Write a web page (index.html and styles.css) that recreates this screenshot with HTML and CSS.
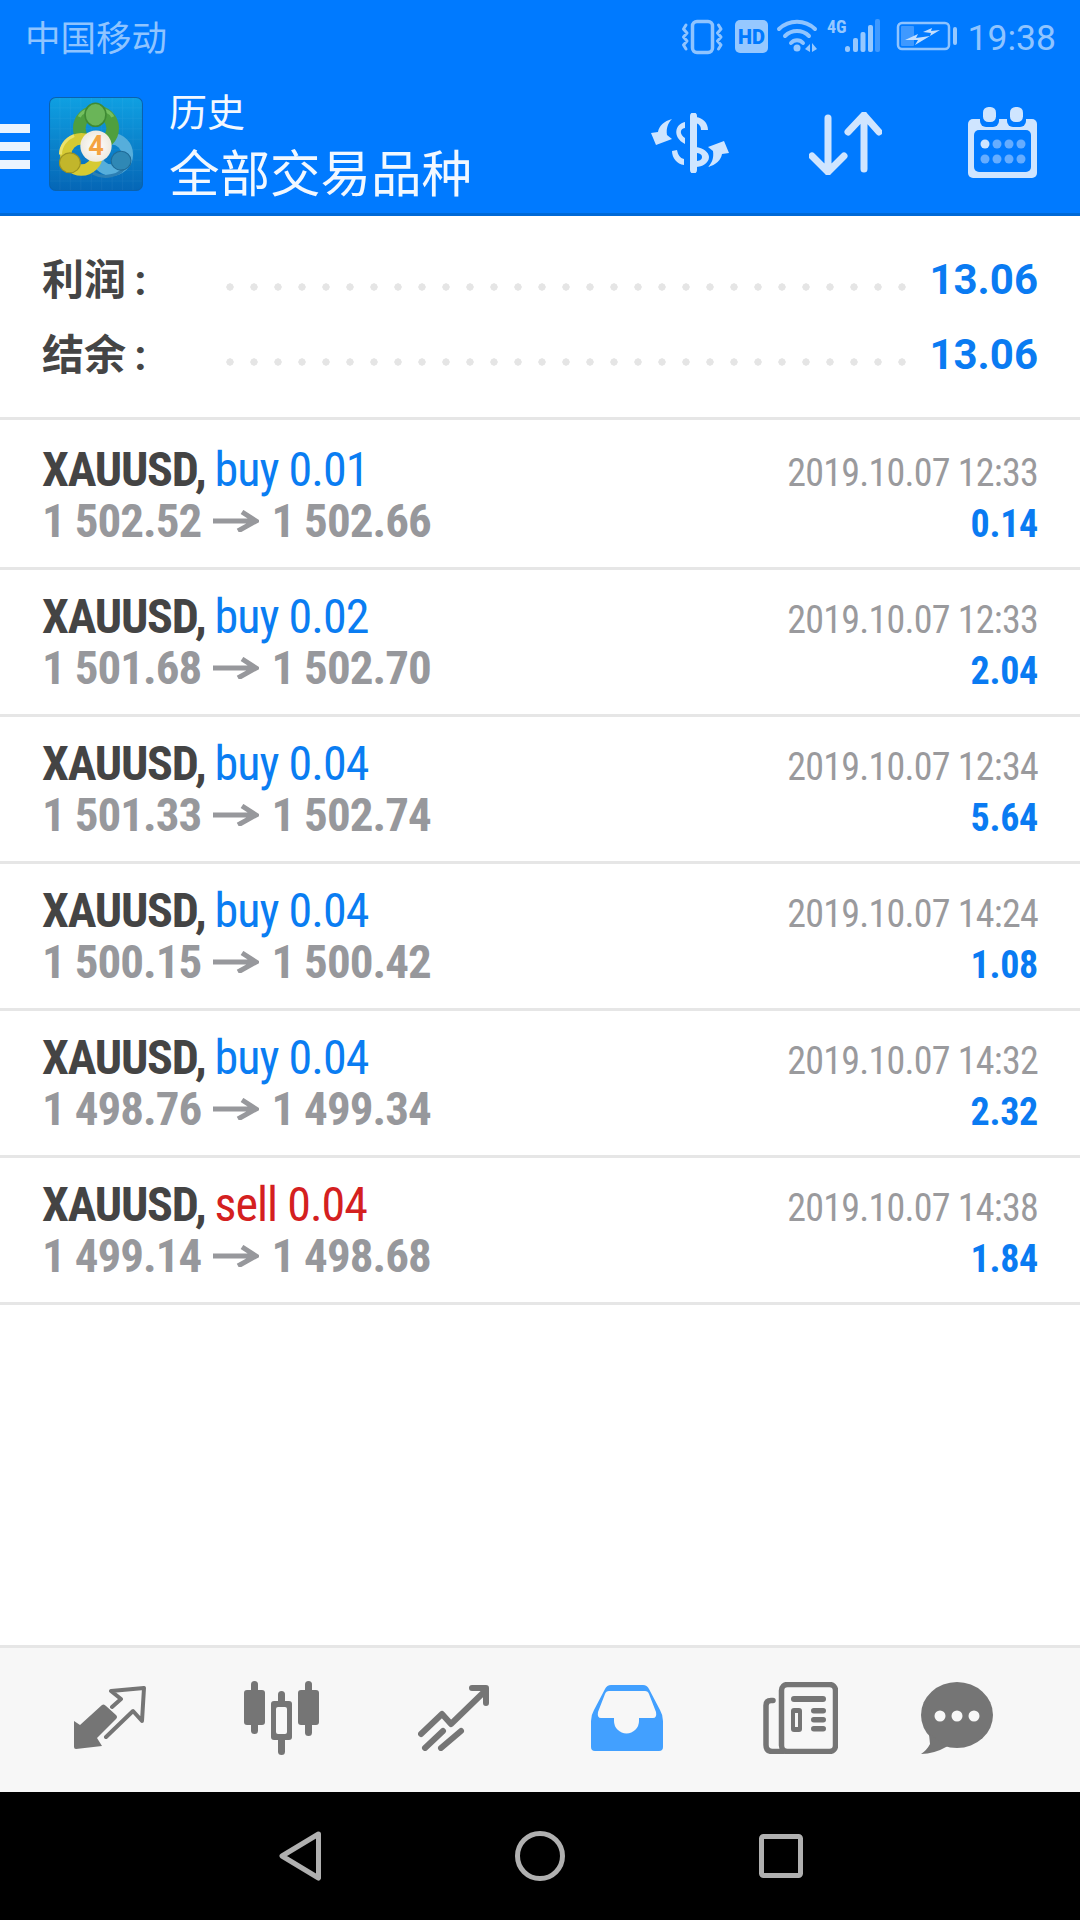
FILE: index.html
```html
<!DOCTYPE html>
<html lang="zh">
<head>
<meta charset="utf-8">
<title>历史</title>
<link rel="stylesheet" href="styles.css">
</head>
<body>
<div class="screen">
  <header class="appbar">
    <div class="status">
      <span class="carrier">中国移动</span>
      <div class="status-right">
        <svg class="status-icons" width="275" height="36" viewBox="0 0 275 36">
          <rect class="st-line" x="10.5" y="2.5" width="20" height="31" rx="4.5" stroke-width="3.500"/>
          <path class="st-line" stroke-width="3" d="M4 6 1.500 10l3.500 4-3.500 4 3.500 4-3.500 4 2.500 4M36.500 6l2.500 4-3.500 4 3.500 4-3.500 4 3.500 4-2.500 4"/>
          <rect class="st-fill" x="53" y="1" width="33" height="33" rx="5"/>
          <text class="hd" x="69.5" y="25" text-anchor="middle">HD</text>
          <circle class="st-fill" cx="115" cy="29" r="3.500"/>
          <path class="st-line" stroke-width="4" d="M97 10A26 26 0 0 1 133 10M103 17A17 17 0 0 1 127 17M109 24A8 8 0 0 1 121 24"/>
          <path class="st-fill" d="M123 30l5-5v8zM130 24l5 6-5 3z"/>
          <text class="net" x="145" y="14">4G</text>
          <rect class="st-fill" x="163" y="27" width="5" height="6" rx="2.500"/>
          <rect class="st-fill" x="171" y="19" width="5" height="14" rx="2"/>
          <rect class="st-fill" x="178.500" y="13" width="5" height="20" rx="2"/>
          <rect class="st-fill" x="186" y="6" width="5" height="27" rx="2"/>
          <rect class="st-dim" x="193" y="0" width="5" height="33" rx="2"/>
          <rect class="st-line" x="216" y="4" width="51" height="26" rx="4" stroke-width="2.500"/>
          <rect class="st-fill" x="271" y="8" width="4" height="18" rx="2"/>
          <rect class="st-dim" x="219" y="7" width="13" height="20" rx="1"/>
          <path class="st-bolt" d="M223 21l13-6-2 4 14-2-15 9 3-5zM241 13l9-4-1 3 9-1-10 6 1-3z"/>
        </svg>
        <span class="clock">19:38</span>
      </div>
    </div>
    <div class="toolbar">
      <div class="menu"><span></span><span></span><span></span></div>
      <svg class="logo" width="94" height="94" viewBox="0 0 90 90">
        <defs>
          <linearGradient id="logoBg" x1="0" y1="0" x2="0" y2="1">
            <stop offset="0" stop-color="#0fa0e2"/>
            <stop offset="1" stop-color="#0566b6"/>
          </linearGradient>
          <pattern id="logoGrid" width="10" height="10" patternUnits="userSpaceOnUse">
            <path d="M10 0H0V10" fill="none" stroke="#fff" stroke-opacity=".07"/>
          </pattern>
          <radialGradient id="logoFace" cx=".5" cy=".5" r=".55">
            <stop offset="0" stop-color="#ffffff"/>
            <stop offset="1" stop-color="#ece7dc"/>
          </radialGradient>
        </defs>
        <rect x=".5" y=".5" width="89" height="89" rx="6" fill="url(#logoBg)" stroke="#0a62ad"/>
        <rect x="1" y="1" width="88" height="88" rx="6" fill="url(#logoGrid)"/>
        <circle cx="60" cy="55" r="15" fill="none" stroke="#56aedb" stroke-width="11"/>
        <path d="M42 73c11 6 27 3 33-9" fill="none" stroke="#2c7fb4" stroke-width="3"/>
        <circle cx="45" cy="30" r="16" fill="none" stroke="#4f9f3f" stroke-width="12"/>
        <path d="M29 19c4-10 28-10 32 0" fill="none" stroke="#74bf5f" stroke-width="3"/>
        <ellipse cx="44.500" cy="17" rx="10" ry="11" fill="#6ab558" stroke="#3f8a34" stroke-width="1.500"/>
        <circle cx="31" cy="55" r="15" fill="none" stroke="#d6ca33" stroke-width="11"/>
        <path d="M24 37c-8 3-13 10-13 18" fill="none" stroke="#ece26a" stroke-width="3"/>
        <ellipse cx="20" cy="63" rx="10" ry="9.500" fill="#c2b62b" stroke="#9d9320" stroke-width="1"/>
        <ellipse cx="69" cy="61" rx="9.500" ry="9" fill="#2f88b5" stroke="#1f6a96" stroke-width="1"/>
        <circle cx="45" cy="47" r="15" fill="url(#logoFace)"/>
        <text class="logo-four" x="45" y="56" text-anchor="middle">4</text>
      </svg>
      <div class="titles">
        <div class="title-small">历史</div>
        <div class="title-large">全部交易品种</div>
      </div>
      <div class="actions">
        <svg width="78" height="60" viewBox="0 0 78 60" class="act-ic">
          <path d="M39 3a3.500 3.500 0 0 1 7 0v54a3.500 3.500 0 0 1-7 0z"/>
          <path d="M45 4C52 5 57 10 57 17h-7c0-4-2-6-5-7z"/>
          <path d="M34 9C24 11 21 24 34 31v-6c-5-3-6-9 0-10z"/>
          <path d="M21 38l5-1c1 5 3 8 7 9v6C26 51 21 45 21 38z"/>
          <path d="M45 34C52 35 58 39 58 44c0 6-7 10-13 10v-6c3 0 6-1 6-4s-3-4-6-4z"/>
          <path d="M21 6C13 8 8 13 7 19L0 20l5 12 16-6-5-4C15 15 17 10 21 6z"/>
          <path d="M57 54C65 52 70 47 71 41l7-1-5-12-16 6 5 4C63 45 61 50 57 54z"/>
        </svg>
        <svg width="73" height="63" viewBox="0 0 73 63" class="act-line">
          <path d="M19 6V60M3 44 19 60 35 44M55 57V3M39 20 55 3 70 20"/>
        </svg>
        <svg class="act-cal" width="69" height="71" viewBox="0 0 69 71">
          <rect class="cal-light" x="0" y="12" width="69" height="59" rx="5"/>
          <rect class="cal-blue" x="12" y="6" width="19" height="14" rx="6"/>
          <rect class="cal-blue" x="39" y="6" width="19" height="14" rx="6"/>
          <rect class="cal-light" x="15" y="0" width="13" height="15" rx="5.500"/>
          <rect class="cal-light" x="42" y="0" width="13" height="15" rx="5.500"/>
          <rect class="cal-blue" x="6" y="23" width="57" height="42" rx="5"/>
          <circle class="cal-light" cx="17" cy="37" r="4.500"/>
          <circle class="cal-dot" cx="29" cy="37" r="4.500"/>
          <circle class="cal-dot" cx="41" cy="37" r="4.500"/>
          <circle class="cal-dot" cx="53" cy="37" r="4.500"/>
          <circle class="cal-dot" cx="17" cy="52" r="4.500"/>
          <circle class="cal-dot" cx="29" cy="52" r="4.500"/>
          <circle class="cal-dot" cx="41" cy="52" r="4.500"/>
          <circle class="cal-dot" cx="53" cy="52" r="4.500"/>
        </svg>
      </div>
    </div>
  </header>

  <section class="summary">
    <div class="sum-row">
      <span class="sum-label">利润 :</span><span class="dots"></span><span class="sum-value">13.06</span>
    </div>
    <div class="sum-row">
      <span class="sum-label">结余 :</span><span class="dots"></span><span class="sum-value">13.06</span>
    </div>
  </section>

  <main class="trades">
    <article class="trade trade-first">
      <div class="trade-left">
        <div class="trade-head"><b>XAUUSD,</b> <span class="buy">buy 0.01</span></div>
        <div class="prices"><span>1 502.52</span><svg class="arrow" width="46" height="22" viewBox="0 0 46 22"><path d="M0 11H43M29 2 43 11 25 21"/></svg><span>1 502.66</span></div>
      </div>
      <div class="trade-right"><div class="date">2019.10.07 12:33</div><div class="profit">0.14</div></div>
    </article>
    <article class="trade">
      <div class="trade-left">
        <div class="trade-head"><b>XAUUSD,</b> <span class="buy">buy 0.02</span></div>
        <div class="prices"><span>1 501.68</span><svg class="arrow" width="46" height="22" viewBox="0 0 46 22"><path d="M0 11H43M29 2 43 11 25 21"/></svg><span>1 502.70</span></div>
      </div>
      <div class="trade-right"><div class="date">2019.10.07 12:33</div><div class="profit">2.04</div></div>
    </article>
    <article class="trade">
      <div class="trade-left">
        <div class="trade-head"><b>XAUUSD,</b> <span class="buy">buy 0.04</span></div>
        <div class="prices"><span>1 501.33</span><svg class="arrow" width="46" height="22" viewBox="0 0 46 22"><path d="M0 11H43M29 2 43 11 25 21"/></svg><span>1 502.74</span></div>
      </div>
      <div class="trade-right"><div class="date">2019.10.07 12:34</div><div class="profit">5.64</div></div>
    </article>
    <article class="trade">
      <div class="trade-left">
        <div class="trade-head"><b>XAUUSD,</b> <span class="buy">buy 0.04</span></div>
        <div class="prices"><span>1 500.15</span><svg class="arrow" width="46" height="22" viewBox="0 0 46 22"><path d="M0 11H43M29 2 43 11 25 21"/></svg><span>1 500.42</span></div>
      </div>
      <div class="trade-right"><div class="date">2019.10.07 14:24</div><div class="profit">1.08</div></div>
    </article>
    <article class="trade">
      <div class="trade-left">
        <div class="trade-head"><b>XAUUSD,</b> <span class="buy">buy 0.04</span></div>
        <div class="prices"><span>1 498.76</span><svg class="arrow" width="46" height="22" viewBox="0 0 46 22"><path d="M0 11H43M29 2 43 11 25 21"/></svg><span>1 499.34</span></div>
      </div>
      <div class="trade-right"><div class="date">2019.10.07 14:32</div><div class="profit">2.32</div></div>
    </article>
    <article class="trade">
      <div class="trade-left">
        <div class="trade-head"><b>XAUUSD,</b> <span class="sell">sell 0.04</span></div>
        <div class="prices"><span>1 499.14</span><svg class="arrow" width="46" height="22" viewBox="0 0 46 22"><path d="M0 11H43M29 2 43 11 25 21"/></svg><span>1 498.68</span></div>
      </div>
      <div class="trade-right"><div class="date">2019.10.07 14:38</div><div class="profit">1.84</div></div>
    </article>
  </main>

  <nav class="tabs">
    <svg class="tab tab-trade" width="72" height="64" viewBox="0 0 72 64">
      <path d="M0 35l6 4L28 19q2-1.500 4 1l10 9q2 2 0 4L23 52l5 8-26 3q-2 0-2-2z"/>
      <path class="tab-line" stroke-width="4" d="M38 21l9-8-10-8 33-3-2 33-9-10-27 26"/>
    </svg>
    <svg class="tab tab-candles" width="75" height="74" viewBox="0 0 75 74">
      <rect x="7" y="0" width="7" height="53" rx="3.500"/>
      <rect x="0" y="9" width="21" height="35" rx="3"/>
      <rect x="34" y="10" width="7" height="64" rx="3.500"/>
      <rect x="27" y="20" width="21" height="39" rx="3"/>
      <rect class="tab-bg" x="32" y="26" width="11" height="27" rx="2"/>
      <rect x="61" y="0" width="7" height="55" rx="3.500"/>
      <rect x="54" y="9" width="21" height="35" rx="3"/>
    </svg>
    <svg class="tab tab-chart" width="71" height="66" viewBox="0 0 71 66">
      <path class="tab-line" stroke-width="6" d="M3 49 24 29l9 10L66 7M54 3H68V18M7 63 25 46M23 63 43 46"/>
    </svg>
    <svg class="tab tab-inbox" width="72" height="66" viewBox="0 0 72 66">
      <path d="M20 0H52q4 0 6 4L69 25q3 5 3 11V62q0 4-4 4H4q-4 0-4-4V36q0-6 3-11L14 4q2-4 6-4z"/>
      <path class="tab-bg" d="M18 6H54q3 0 4 3l7 18q1 6-3 6H48v3A12.500 12.500 0 0 1 23 36V33H10q-4 0-3-6L14 9q1-3 4-3z"/>
    </svg>
    <svg class="tab tab-news" width="75" height="72" viewBox="0 0 75 72">
      <rect class="tab-line" stroke-width="5.500" x="18.500" y="2.500" width="54" height="67" rx="6"/>
      <path class="tab-line" stroke-width="5.500" d="M10 18.500H8q-5 0-5 5V63q0 6.500 6.500 6.500H20"/>
      <rect x="28" y="14" width="35" height="6" rx="3"/>
      <rect x="28" y="26" width="11" height="24" rx="3"/>
      <rect class="tab-bg" x="32" y="31" width="3" height="14"/>
      <rect x="48" y="26" width="15" height="5.500" rx="2.750"/>
      <rect x="48" y="35" width="15" height="5.500" rx="2.750"/>
      <rect x="48" y="44" width="15" height="5.500" rx="2.750"/>
    </svg>
    <svg class="tab tab-chat" width="72" height="72" viewBox="0 0 72 72">
      <ellipse cx="36" cy="33" rx="36" ry="33"/>
      <path d="M8 52 9 62Q6 68 0 72 13 72 27 64z"/>
      <circle class="tab-bg" cx="19" cy="34" r="5.500"/>
      <circle class="tab-bg" cx="36" cy="34" r="5.500"/>
      <circle class="tab-bg" cx="53" cy="34" r="5.500"/>
    </svg>
  </nav>

  <footer class="sysnav">
    <svg width="42" height="50" viewBox="0 0 42 50"><path d="M39.500 3 3 25 39.500 47z"/></svg>
    <svg width="50" height="50" viewBox="0 0 50 50"><circle cx="25" cy="25" r="22.500"/></svg>
    <svg width="44" height="44" viewBox="0 0 44 44"><rect x="2.500" y="2.500" width="39" height="39" rx="2"/></svg>
  </footer>
</div>
</body>
</html>
```
FILE: styles.css
```css
* { box-sizing: border-box; }

html, body { margin: 0; padding: 0; }

body {
  font-family: Roboto, "Noto Sans CJK SC", sans-serif;
  background: #fff;
}

.screen {
  width: 1080px;
  height: 1920px;
  display: flex;
  flex-direction: column;
  overflow: hidden;
}

/* App bar */
.appbar {
  background: #007aff;
  border-bottom: 3px solid #0069d6;
  height: 216px;
  flex: none;
}

.status {
  height: 72px;
  display: flex;
  align-items: center;
  justify-content: space-between;
  padding: 0 24px 0 25px;
  color: #8fc4ff;
}

.carrier {
  font-family: "Noto Sans CJK SC", sans-serif;
  font-size: 35.500px;
  line-height: 40px;
}

.status-right { display: flex; align-items: center; gap: 11px; margin-top: 2px; }

.status-icons { overflow: visible; }

.clock { font-size: 35.500px; line-height: 40px; margin-top: 1px; }

.st-line { fill: none; stroke: #8fc4ff; stroke-linecap: round; stroke-linejoin: round; }
.st-fill { fill: #96c8ff; }
.st-dim { fill: #3f99ff; }
.st-bolt { fill: #c4dfff; }

.hd {
  font-family: Roboto, sans-serif;
  font-weight: 900;
  font-size: 20px;
  fill: #007aff;
}

.net {
  font-family: "Roboto Condensed", Roboto, sans-serif;
  font-stretch: 75%;
  font-weight: 700;
  font-size: 18px;
  fill: #96c8ff;
}

.toolbar {
  height: 141px;
  display: flex;
  align-items: center;
}

.menu {
  width: 30px;
  display: flex;
  flex-direction: column;
  gap: 9px;
  margin-top: 8px;
}

.menu span { display: block; height: 9px; background: #eaf4ff; }

.logo { margin: 3px 0 0 19px; flex: none; }

.titles {
  margin: 1px 0 0 26px;
  color: #f2f8ff;
  font-family: "Noto Sans CJK SC", sans-serif;
}

.title-small { font-size: 38px; line-height: 46px; }
.title-large { font-size: 50.500px; line-height: 60px; margin-top: 7px; }

.actions {
  margin-left: auto;
  padding-right: 43px;
  display: flex;
  align-items: center;
  gap: 80px;
}

.act-ic { fill: #cfe5ff; }
.act-line { fill: none; stroke: #cfe5ff; stroke-width: 7; stroke-linecap: round; stroke-linejoin: round; margin-top: 2px; }
.act-cal { margin-left: 6px; }
.cal-light { fill: #cfe5ff; }
.cal-blue { fill: #007aff; }
.cal-dot { fill: #66adff; }

/* Summary */
.summary {
  flex: none;
  height: 204px;
  padding: 26px 42px 0 42px;
  border-bottom: 3px solid #e6e6e6;
}

.sum-row {
  height: 75px;
  display: flex;
  align-items: center;
}

.sum-label {
  width: 184px;
  flex: none;
  font-size: 42px;
  font-weight: 700;
  line-height: 48px;
  word-spacing: -2px;
  color: #454545;
  margin-top: 3px;
}

.dots {
  width: 680px;
  height: 8px;
  flex: none;
  margin-top: 15px;
  background: radial-gradient(circle at 4px 4px, #e5e5e5 3.400px, transparent 3.900px) 0 0 / 24px 8px repeat-x;
}

.sum-value {
  margin-left: auto;
  font-size: 42px;
  font-weight: 700;
  line-height: 48px;
  color: #0a7bf2;
}

/* Trades */
.trades { flex: 1; }

.trade {
  height: 147px;
  padding: 21px 42px 0 42px;
  display: flex;
  justify-content: space-between;
  border-bottom: 3px solid #e6e6e6;
  font-family: "Roboto Condensed", Roboto, sans-serif;
  font-stretch: 75%;
}

.trade-first { height: 150px; padding-top: 24px; }

.trade-head { font-size: 48px; line-height: 52px; }

.trade-head b { font-weight: 700; color: #444; letter-spacing: -1.200px; }
.buy, .sell { letter-spacing: -.950px; margin-left: -2px; }
.buy { color: #0a7df2; }
.sell { color: #d4201f; }

.prices {
  display: flex;
  align-items: center;
  gap: 12px;
  margin-top: -1px;
  font-size: 47px;
  line-height: 52px;
  font-weight: 700;
  letter-spacing: -.950px;
  color: #97989c;
}

.arrow { fill: none; stroke: #97989c; stroke-width: 5; }

.trade-right { text-align: right; margin-top: 4px; }

.date { font-size: 38px; line-height: 51px; letter-spacing: -.750px; color: #9a9a9d; }
.profit { font-size: 38px; line-height: 51px; font-weight: 700; letter-spacing: -.300px; color: #0a7bf2; }

/* Tab bar */
.tabs {
  flex: none;
  height: 147px;
  background: #f7f7f7;
  border-top: 3px solid #e6e6e6;
  padding: 0 0 5px 74px;
  display: flex;
  align-items: center;
}

.tab { flex: none; fill: #757575; }
.tab-line { fill: none; stroke: #757575; stroke-linejoin: round; stroke-linecap: round; }
.tab-bg { fill: #f7f7f7; }

.tab-candles { margin-left: 98px; }
.tab-chart { margin-left: 99px; }
.tab-inbox { margin-left: 102px; fill: #42a0ff; }
.tab-inbox .tab-bg { fill: #f7f7f7; }
.tab-news { margin-left: 100px; }
.tab-chat { margin-left: 83px; }

/* System navigation */
.sysnav {
  flex: none;
  height: 128px;
  background: #000;
  display: flex;
  align-items: center;
  gap: 194px;
  padding-left: 279px;
}

.sysnav svg { fill: none; stroke: #b0b0b0; stroke-width: 5; stroke-linejoin: round; flex: none; }

.logo-four {
  font-family: Roboto, sans-serif;
  font-weight: 700;
  font-size: 26px;
  fill: #f4a341;
}
```
